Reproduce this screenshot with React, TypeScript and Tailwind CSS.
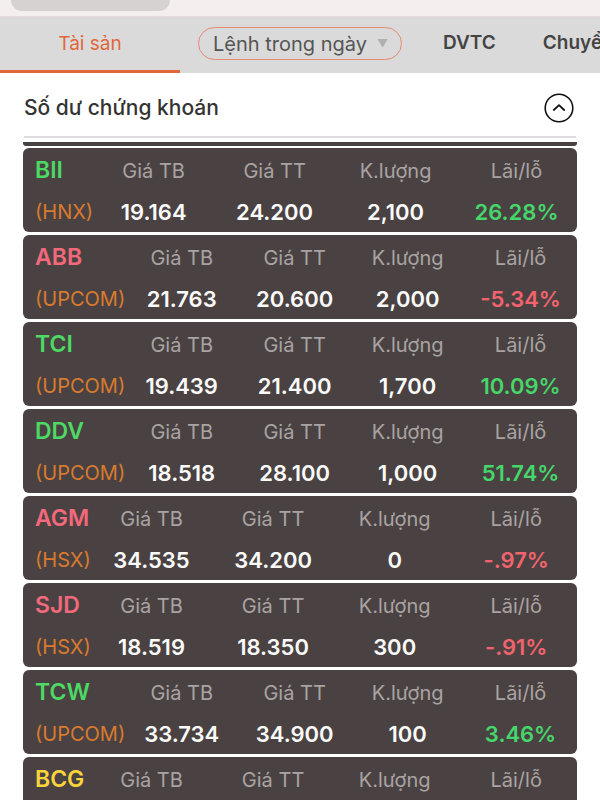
import React from "react";

type Row = {
  sym: string;
  symColor: string;
  ex: string;
  tb: string;
  tt: string;
  kl: string;
  pl: string;
  plColor: string;
};

const GREEN = "text-[#4cd964]";
const RED = "text-[#f2697b]";
const YELLOW = "text-[#f7d43c]";
const PGREEN = "text-[#46d66a]";
const PRED = "text-[#f2636d]";

const rows: Row[] = [
  { sym: "BII", symColor: GREEN, ex: "(HNX)", tb: "19.164", tt: "24.200", kl: "2,100", pl: "26.28%", plColor: PGREEN },
  { sym: "ABB", symColor: RED, ex: "(UPCOM)", tb: "21.763", tt: "20.600", kl: "2,000", pl: "-5.34%", plColor: PRED },
  { sym: "TCI", symColor: GREEN, ex: "(UPCOM)", tb: "19.439", tt: "21.400", kl: "1,700", pl: "10.09%", plColor: PGREEN },
  { sym: "DDV", symColor: GREEN, ex: "(UPCOM)", tb: "18.518", tt: "28.100", kl: "1,000", pl: "51.74%", plColor: PGREEN },
  { sym: "AGM", symColor: RED, ex: "(HSX)", tb: "34.535", tt: "34.200", kl: "0", pl: "-.97%", plColor: PRED },
  { sym: "SJD", symColor: RED, ex: "(HSX)", tb: "18.519", tt: "18.350", kl: "300", pl: "-.91%", plColor: PRED },
  { sym: "TCW", symColor: GREEN, ex: "(UPCOM)", tb: "33.734", tt: "34.900", kl: "100", pl: "3.46%", plColor: PGREEN },
  { sym: "BCG", symColor: YELLOW, ex: "(HSX)", tb: "20.150", tt: "21.000", kl: "500", pl: "4.22%", plColor: PGREEN },
];

function Col({ label, value, valueColor }: { label: string; value: string; valueColor: string }) {
  return (
    <div className="flex-1 basis-0 flex flex-col items-center">
      <div className="h-[44px] pt-[2px] flex items-center text-[20px] text-[#a9a3a3] whitespace-nowrap">{label}</div>
      <div className={`h-[40px] flex items-center text-[22px] font-semibold whitespace-nowrap ${valueColor}`}>{value}</div>
    </div>
  );
}

function Card({ r }: { r: Row }) {
  return (
    <div className="mx-[23px] h-[84px] shrink-0 rounded-[6px] bg-[#4a4242] flex pl-[12px]">
      <div className="flex flex-col">
        <div className={`h-[44px] flex items-center text-[23px] font-semibold ${r.symColor}`}>{r.sym}</div>
        <div className="h-[40px] flex items-center text-[20px] text-[#d97a2e]">{r.ex}</div>
      </div>
      <Col label="Giá TB" value={r.tb} valueColor="text-[#fafafa]" />
      <Col label="Giá TT" value={r.tt} valueColor="text-[#fafafa]" />
      <Col label="K.lượng" value={r.kl} valueColor="text-[#fafafa]" />
      <Col label="Lãi/lỗ" value={r.pl} valueColor={r.plColor} />
    </div>
  );
}

export default function App() {
  return (
    <div
      className="w-[600px] h-[800px] overflow-hidden bg-white flex flex-col"
      style={{ fontFamily: "Inter, 'Noto Sans', 'Liberation Sans', sans-serif" }}
    >
      {/* top strip */}
      <div className="h-[17px] shrink-0 bg-[#f4eeee] border-b border-[#e2dcdc]">
        <div className="ml-[11px] w-[159px] h-[11px] bg-[#d6d2d2] rounded-b-[12px]" />
      </div>

      {/* tab bar */}
      <div className="h-[56px] shrink-0 bg-[#dadada] flex items-stretch overflow-hidden whitespace-nowrap">
        <div className="w-[180px] shrink-0 flex items-center justify-center border-b-[3px] border-[#e0673a] pt-[2px] text-[19px] text-[#e0673a]">
          Tài sản
        </div>
        <div className="flex items-center pb-[3px]">
          <div className="ml-[18px] w-[204px] h-[33px] rounded-full border-[1.5px] border-[#e38a70] flex items-center pl-[14px] text-[20px] text-[#555]">
            Lệnh trong ngày
            <span className="ml-[10px] text-[11px] text-[#b0b0b0]">▼</span>
          </div>
          <div className="ml-[41px] text-[19px] font-semibold text-[#444]">DVTC</div>
          <div className="ml-[47px] text-[19px] font-semibold text-[#444]">Chuyển tiền</div>
        </div>
      </div>

      {/* section header */}
      <div className="h-[63px] shrink-0 flex items-center justify-between pl-[24px] pr-[26px] pt-[6px]">
        <div className="text-[21px] font-medium text-[#333]">Số dư chứng khoán</div>
        <svg width="30" height="30" viewBox="0 0 30 30" fill="none">
          <circle cx="15" cy="15" r="13.8" stroke="#111" strokeWidth="1.6" />
          <path d="M9.8 17 L15 12.2 L20.2 17" stroke="#111" strokeWidth="1.8" strokeLinecap="round" strokeLinejoin="round" />
        </svg>
      </div>
      <div className="mx-[24px] h-[2px] shrink-0 bg-[#dddddd]" />
      <div className="mx-[23px] mt-[4px] h-[4px] shrink-0 bg-[#4a4242] rounded-b-[3px]" />

      <div className="flex flex-col gap-[3px] mt-[2px]">
        {rows.map((r) => (
          <Card key={r.sym} r={r} />
        ))}
      </div>
    </div>
  );
}
